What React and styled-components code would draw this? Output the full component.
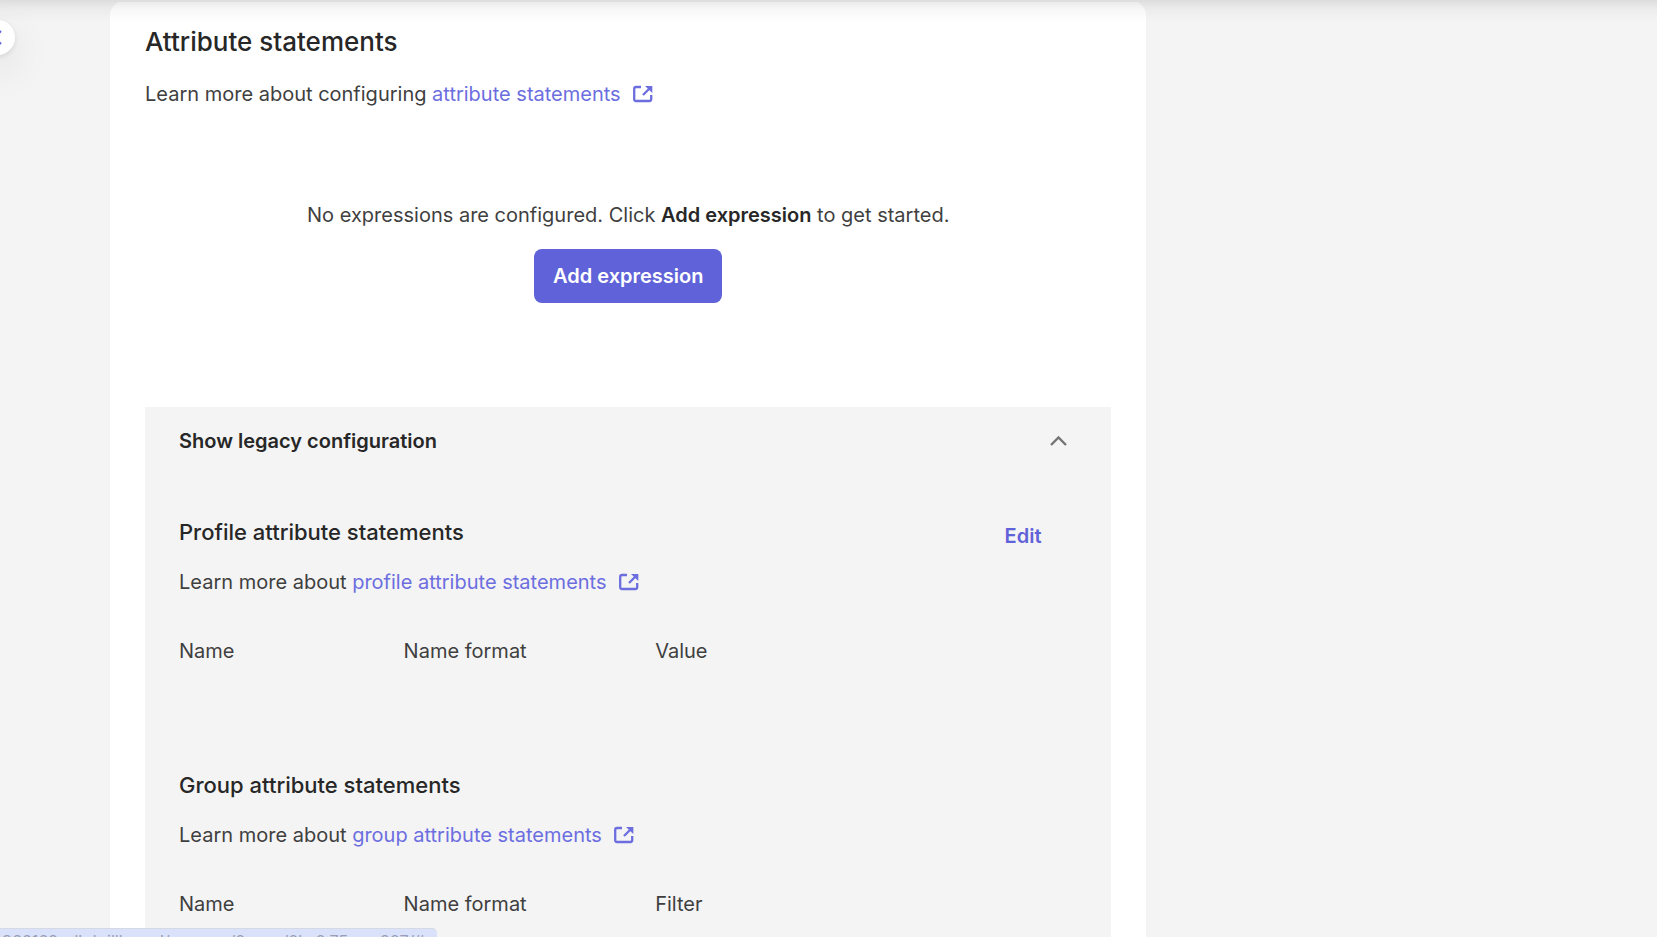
import React, { useState } from "react";
import styled, { createGlobalStyle } from "styled-components";

const GlobalStyle = createGlobalStyle`
  *, *::before, *::after { box-sizing: border-box; }
  html, body { margin: 0; height: 100%; overflow: hidden; }
  body {
    background: #f4f4f4;
    color: #3f3f3f;
    font-family: Inter, "Liberation Sans", sans-serif;
    font-size: 20px;
    line-height: 32px;
  }
  #root { height: 100%; }
`;

const Page = styled.div`
  position: relative;
  min-height: 100%;
  display: grid;
  grid-template-columns: 67fr 33fr;
  padding-left: 110px;
`;

const TopShade = styled.div`
  position: fixed;
  inset: 0 0 auto;
  height: 22px;
  border-top: 2px solid #dedede;
  background: linear-gradient(rgba(0, 0, 0, 0.08), rgba(0, 0, 0, 0.03) 35%, rgba(0, 0, 0, 0));
  pointer-events: none;
`;

const CollapseButton = styled.button`
  position: fixed;
  top: 20px;
  left: -20px;
  width: 35px;
  height: 35px;
  padding: 0;
  border: 0;
  border-radius: 50%;
  background: #fff;
  color: #5f62d8;
  box-shadow: 0 2px 6px rgba(0, 0, 0, 0.1), 0 14px 40px rgba(0, 0, 0, 0.1);

  svg { display: block; margin: 0 auto; }
`;

const Panel = styled.main`
  min-width: 0;
  padding: 24px 35px 0;
  border-radius: 16px 16px 0 0;
  background: #fff;
`;

const Title = styled.h2`
  margin: 0;
  color: #272727;
  font-size: 26px;
  line-height: 36px;
  font-weight: 500;
`;

const Subtitle = styled.h3`
  margin: 0;
  color: #272727;
  font-size: 22px;
  line-height: 32px;
  font-weight: 500;
`;

const Hint = styled.p`
  margin: 18px 0 0;
`;

const DocLink = styled.a`
  color: #6c6ee0;
  text-decoration: none;

  svg { margin-left: 12px; vertical-align: -2px; }
`;

const Empty = styled.section`
  display: flex;
  flex-direction: column;
  align-items: center;
  gap: 18px;
  padding: 89px 0 104px;

  p { margin: 0; }
  strong { color: #272727; font-weight: 600; }
`;

const PrimaryButton = styled.button`
  height: 54px;
  padding: 0 19px;
  border: 0;
  border-radius: 8px;
  background: #5f62d8;
  color: #fff;
  font: 600 20px/32px Inter, "Liberation Sans", sans-serif;
`;

const Legacy = styled.section`
  padding: 18px 34px 40px;
  background: #f4f4f4;
`;

const LegacyToggle = styled.button`
  display: flex;
  width: 100%;
  align-items: center;
  justify-content: space-between;
  padding: 0 10px 0 0;
  border: 0;
  background: none;
  color: #272727;
  font: 600 20px/32px Inter, "Liberation Sans", sans-serif;
  text-align: left;
`;

const Group = styled.section`
  padding-top: ${(p) => p.$top}px;
`;

const GroupHead = styled.header`
  display: flex;
  align-items: flex-end;
  justify-content: space-between;
  height: 32px;
`;

const EditButton = styled.button`
  height: 28px;
  margin-right: 36px;
  padding: 0;
  border: 0;
  background: none;
  color: #5f62d8;
  font: 600 20px/32px Inter, "Liberation Sans", sans-serif;
`;

const Columns = styled.table`
  width: 100%;
  margin-top: 37px;
  border-collapse: collapse;
  table-layout: fixed;

  th { padding: 0; font-weight: 400; text-align: left; }
  th:nth-child(1) { width: 25%; }
  th:nth-child(2) { width: 28%; }
`;

const StatusBar = styled.div`
  position: fixed;
  left: 0;
  bottom: 0;
  width: 437px;
  height: 9px;
  padding: 4px 14px 0 2px;
  overflow: hidden;
  border-top: 1px solid #d5d9e4;
  border-radius: 0 5px 0 0;
  background: #d9e1fb;
  color: #989fb6;
  font-size: 16px;
  line-height: 16px;
  white-space: nowrap;
`;

function ExternalIcon() {
  return (
    <svg width="20" height="18" viewBox="0 0 20 18" fill="none" stroke="currentColor" strokeWidth="2.3" aria-hidden="true">
      <path d="M8 2H3Q1.200 2 1.200 4V14Q1.200 16 3 16H16.500Q18.200 16 18.200 14V10" />
      <path d="M10 10L17 3" />
      <path d="M12 1H19.300V8Z" fill="currentColor" stroke="none" />
    </svg>
  );
}

function Columned({ labels }) {
  return (
    <Columns>
      <thead>
        <tr>{labels.map((l) => <th key={l} scope="col">{l}</th>)}</tr>
      </thead>
    </Columns>
  );
}

export default function App() {
  const [open, setOpen] = useState(true);
  return (
    <Page>
      <GlobalStyle />
      <Panel>
        <Title>Attribute statements</Title>
        <Hint>
          Learn more about configuring{" "}
          <DocLink href="#attributes">attribute statements<ExternalIcon /></DocLink>
        </Hint>
        <Empty>
          <p>No expressions are configured. Click <strong>Add expression</strong> to get started.</p>
          <PrimaryButton type="button">Add expression</PrimaryButton>
        </Empty>
        <Legacy>
          <LegacyToggle type="button" aria-expanded={open} onClick={() => setOpen(!open)}>
            Show legacy configuration
            <svg width="17" height="11" viewBox="0 0 17 11" fill="none" stroke="#747474" strokeWidth="2.4" aria-hidden="true">
              <path d={open ? "M1 9L8.500 1.500L16 9" : "M1 2L8.500 9.500L16 2"} />
            </svg>
          </LegacyToggle>
          {open && (
            <>
              <Group $top={59}>
                <GroupHead>
                  <Subtitle>Profile attribute statements</Subtitle>
                  <EditButton type="button">Edit</EditButton>
                </GroupHead>
                <Hint>
                  Learn more about{" "}
                  <DocLink href="#profile">profile attribute statements<ExternalIcon /></DocLink>
                </Hint>
                <Columned labels={["Name", "Name format", "Value"]} />
              </Group>
              <Group $top={102}>
                <Subtitle>Group attribute statements</Subtitle>
                <Hint>
                  Learn more about{" "}
                  <DocLink href="#group">group attribute statements<ExternalIcon /></DocLink>
                </Hint>
                <Columned labels={["Name", "Name format", "Filter"]} />
              </Group>
            </>
          )}
        </Legacy>
      </Panel>
      <TopShade />
      <CollapseButton type="button" aria-label="Collapse navigation">
        <svg width="35" height="35" viewBox="0 0 35 35" fill="none" stroke="currentColor" strokeWidth="2">
          <path d="M21 11L14.500 17.500L21 24" />
        </svg>
      </CollapseButton>
      <StatusBar>366169-alb.b.illb.ausl/app.exa/0acoe/0lc.0.75.am.207/#</StatusBar>
    </Page>
  );
}
